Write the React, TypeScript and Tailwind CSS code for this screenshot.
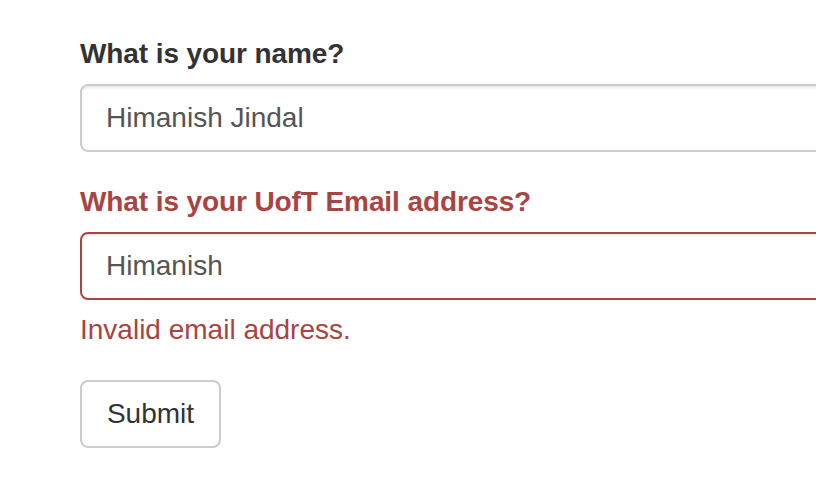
import React from "react";

export default function App() {
  return (
    <div className="w-[816px] h-[500px] overflow-hidden bg-white" style={{ fontFamily: '"Liberation Sans", Arial, sans-serif' }}>
      <form className="pl-[80px] pt-[34px] w-[1200px]" onSubmit={(e) => e.preventDefault()}>
        <div className="mb-[30px]">
          <label className="block font-bold text-[28px] leading-[40px] text-[#333] mb-[10px] tracking-[-0.1px]">What is your name?</label>
          <input
            readOnly
            value="Himanish Jindal"
            className="block w-full h-[68px] px-[24px] text-[28px] text-[#555] border-2 border-[#ccc] rounded-[8px] shadow-[inset_0_2px_2px_rgba(0,0,0,0.075)] outline-none"
          />
        </div>
        <div className="mb-[30px]">
          <label className="block font-bold text-[28px] leading-[40px] text-[#a94442] mb-[10px] tracking-[-0.1px]">What is your UofT Email address?</label>
          <input
            readOnly
            value="Himanish"
            className="block w-full h-[68px] px-[24px] text-[28px] text-[#555] border-2 border-[#a94442] rounded-[8px] shadow-[inset_0_2px_2px_rgba(0,0,0,0.075)] outline-none"
          />
          <div className="mt-[10px] text-[28px] leading-[40px] text-[#a94442]">Invalid email address.</div>
        </div>
        <button
          type="submit"
          className="w-[141px] h-[68px] text-[28px] text-[#333] bg-white border-2 border-[#ccc] rounded-[8px]"
        >
          Submit
        </button>
      </form>
    </div>
  );
}
